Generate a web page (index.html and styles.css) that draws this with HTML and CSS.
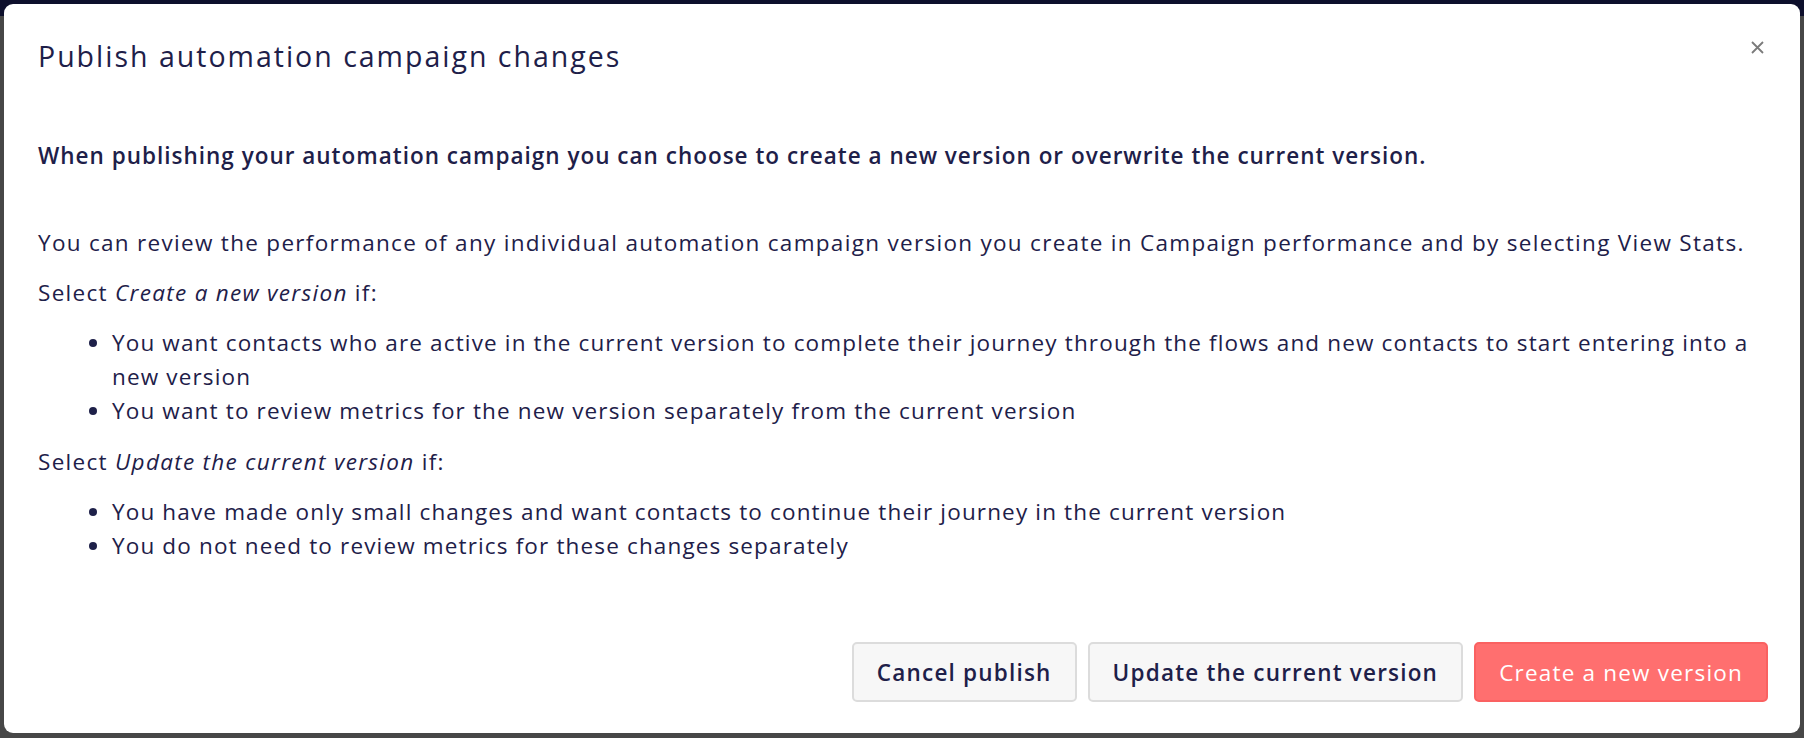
FILE: index.html
```html
<!DOCTYPE html>
<html>
<head>
  <meta charset="UTF-8">
  <title>Publish automation campaign changes</title>
  <link rel="stylesheet" href="styles.css">
</head>
<body>
  <div class="backdrop">
    <div class="topbar"></div>
    <div class="modal">
      <button class="close" aria-label="Close">
        <svg width="13" height="13" viewBox="0 0 13 13"><path d="M1 1L12 12M12 1L1 12" stroke="#7b7b7b" stroke-width="1.8" fill="none"/></svg>
      </button>

      <div class="modal-header">
        <h2 class="title">Publish automation campaign changes</h2>
      </div>

      <div class="modal-body">
        <p class="lead">When publishing your automation campaign you can choose to create a new version or overwrite the current version.</p>
        <p>You can review the performance of any individual automation campaign version you create in Campaign performance and by selecting View Stats.</p>
        <p>Select <em>Create a new version</em> if:</p>
        <ul>
          <li>You want contacts who are active in the current version to complete their journey through the flows and new contacts to start entering into a new version</li>
          <li>You want to review metrics for the new version separately from the current version</li>
        </ul>
        <p>Select <em>Update the current version</em> if:</p>
        <ul>
          <li>You have made only small changes and want contacts to continue their journey in the current version</li>
          <li>You do not need to review metrics for these changes separately</li>
        </ul>
      </div>

      <div class="modal-footer">
        <button class="btn">Cancel publish</button>
        <button class="btn">Update the current version</button>
        <button class="btn btn-primary">Create a new version</button>
      </div>
    </div>
  </div>
</body>
</html>
```

FILE: styles.css
```css
html, body {
  margin: 0;
  height: 100%;
}

body {
  font-family: "Open Sans", Arial, sans-serif;
  background: #474747;
  color: #1e2049;
  overflow: hidden;
}

.backdrop {
  position: relative;
  height: 738px;
  padding: 4px 4px 5px 4px;
  box-sizing: border-box;
}

.topbar {
  position: absolute;
  left: 0;
  right: 0;
  top: 0;
  height: 16px;
  background: #0d0f2c;
}

.modal {
  position: relative;
  height: 729px;
  background: #fff;
  border-radius: 9px;
  display: flex;
  flex-direction: column;
  box-sizing: border-box;
}

.close {
  position: absolute;
  top: 37px;
  right: 36px;
  border: none;
  background: none;
  padding: 0;
  cursor: pointer;
}

.modal-header {
  padding: 32px 34px 0;
}

.title {
  margin: 0;
  font-size: 28.5px;
  line-height: 40px;
  font-weight: 500;
  letter-spacing: 2px;
}

.modal-body {
  padding: 63px 30px 0 34px;
  font-size: 22.5px;
  line-height: 33.75px;
  letter-spacing: 1.3px;
}

.modal-body p {
  margin: 0 0 16px;
}

.modal-body .lead {
  font-weight: 600;
  letter-spacing: 1px;
  margin-bottom: 53px;
}

.modal-body ul {
  margin: 17px 0 17px;
  padding-left: 74px;
  letter-spacing: 1.15px;
}

.modal-footer {
  margin-top: auto;
  padding: 0 32px 31px;
  display: flex;
  justify-content: flex-end;
  gap: 11px;
}

.btn {
  height: 60px;
  padding: 0 23px;
  font-family: inherit;
  font-size: 22.5px;
  font-weight: 600;
  letter-spacing: 1.2px;
  color: #1e2049;
  background: #f7f7f7;
  border: 2px solid #dcdcdc;
  border-radius: 5px;
  cursor: pointer;
}

.btn-primary {
  background: #ff6f6f;
  border-color: #fa6161;
  color: #fff;
  font-weight: 500;
}
```
